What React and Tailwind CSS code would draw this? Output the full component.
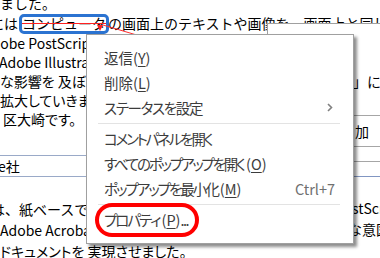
export default function App() {
  const jp = "font-['Noto_Sans_CJK_JP','Noto_Sans',sans-serif]";
  return (
    <div className={`relative w-[380px] h-[258px] overflow-hidden bg-white text-black ${jp} text-[14px]`}>
      {/* document */}
      <div className="-mt-[6px]">
        <div className="h-[19px] leading-[19px] whitespace-nowrap">ました。</div>
        <div className="h-[21px] flex items-center whitespace-nowrap -ml-[10px]">
          <span>には</span>
          <span className="inline-flex items-center h-[20px] px-0 border-[3px] border-[#2b73d1] rounded-[5px] ml-[1px]">
            <span className="line-through decoration-[#ff2020]">コンピュータ</span>
          </span>
          <span className="ml-[-1px]">の画面上のテキストや画像を、画面上と同じ通りに</span>
        </div>
        <div className="flex [font-feature-settings:'palt']">
          {/* left column */}
          <div className="w-[354px] overflow-hidden whitespace-nowrap">
            <div className="h-[19px] leading-[19px] -ml-[17px]">Adobe PostScript を使って表示</div>
            <div className="h-[19px] leading-[19px] -ml-[8px]">「Adobe Illustrator」などのソフト</div>
            <div className="h-[19px] leading-[19px]">な影響を 及ぼしました。</div>
            <div className="h-[19px] leading-[19px]">拡大していきました。</div>
            <div className="h-[19px] leading-[19px] pl-[3px]">区大崎です。</div>
            <div className="h-[26px]" />
            <div className="h-[22px] leading-[20px] border-y border-[#9aaac8] -ml-[2px]">e社</div>
            <div className="h-[22px]" />
            <div className="h-[21px] leading-[21px] -ml-[9px] [font-feature-settings:normal]">は、紙ベースで、Adobe PostScript</div>
            <div className="h-[21px] leading-[21px]">Adobe Acrobat の意図</div>
            <div className="h-[20px] leading-[20px]">ドキュメントを 実現させました。</div>
          </div>
          {/* right column */}
          <div className="flex-1 overflow-hidden whitespace-nowrap [font-feature-settings:normal]">
            <div className="h-[38px]" />
            <div className="h-[19px] leading-[19px] -ml-[1px]">」に</div>
            <div className="h-[24px]" />
            <div className="h-[32px] leading-[30px] border-y border-[#a6a6a6] pl-[1px]">加</div>
            <div className="h-[15px] border-b border-[#a6a6a6]" />
            <div className="h-[15px] border-b border-[#8196c2]" />
            <div className="h-[21px]" />
            <div className="h-[21px] leading-[21px] -ml-[19px]">PostScript</div>
            <div className="h-[21px] leading-[21px] -ml-[6px]">な意図</div>
          </div>
        </div>
      </div>

      {/* popup note behind menu */}
      <div className="absolute left-[267px] top-[23px] right-0 h-[20px] bg-white border-t border-l border-[#a0a0a0]" />

      {/* annotation connector */}
      <svg className="absolute left-0 top-0" width="380" height="258">
        <path d="M97 25 L103 25 L100 31 Z" fill="#ff2020" />
        <line x1="103" y1="25" x2="140" y2="36" stroke="#ff3030" strokeWidth="1" />
      </svg>

      {/* context menu */}
      <div className="absolute left-[86px] top-[34px] w-[268px] h-[210px] bg-white border border-[#a0a0a0] shadow-[3px_3px_3px_rgba(0,0,0,0.45)] pt-[10px] text-[14.5px] text-[#3c3c3c] [font-feature-settings:'palt']">
        <div className="h-[25px] flex items-center pl-[17px]">返信(<span className="underline underline-offset-2">Y</span>)</div>
        <div className="h-[25px] flex items-center pl-[17px]">削除(<span className="underline underline-offset-2">L</span>)</div>
        <div className="h-[25px] flex items-center pl-[17px] pr-[20px] justify-between">
          <span className="tracking-[-1.3px]">ステータスを設定</span>
          <svg width="6" height="9" viewBox="0 0 6 9"><path d="M1 1 L4.5 4.5 L1 8" fill="none" stroke="#808080" strokeWidth="1.6" /></svg>
        </div>
        <div className="h-[6px] flex items-center pl-[11px] pr-[13px]"><div className="h-px w-full bg-[#e3e3e3]" /></div>
        <div className="h-[25px] flex items-center pl-[17px]"><span className="tracking-[-2.2px]">コメントパネルを開</span>く</div>
        <div className="h-[25px] flex items-center pl-[17px]"><span className="tracking-[-2.2px]">すべてのポップアップを開</span><span>く(<span className="underline underline-offset-2">O</span>)</span></div>
        <div className="h-[25px] flex items-center pl-[17px] pr-[18px] justify-between">
          <span><span className="tracking-[-2px]">ポップアップを最小</span>化(<span className="underline underline-offset-2">M</span>)</span>
          <span className="text-[#707070]">Ctrl+7</span>
        </div>
        <div className="h-[6px] flex items-center pl-[11px] pr-[13px]"><div className="h-px w-full bg-[#e3e3e3]" /></div>
        <div className="h-[25px] flex items-center pl-[8px]">
          <span className="h-[34px] flex items-center pl-[5px] pr-[7px] border-4 border-[#ff0000] rounded-full">
            <span><span className="tracking-[-2px]">プロパテ</span>ィ(<span className="underline underline-offset-2">P</span>)<span className="tracking-[-1.5px]">...</span></span>
          </span>
        </div>
      </div>
    </div>
  );
}
